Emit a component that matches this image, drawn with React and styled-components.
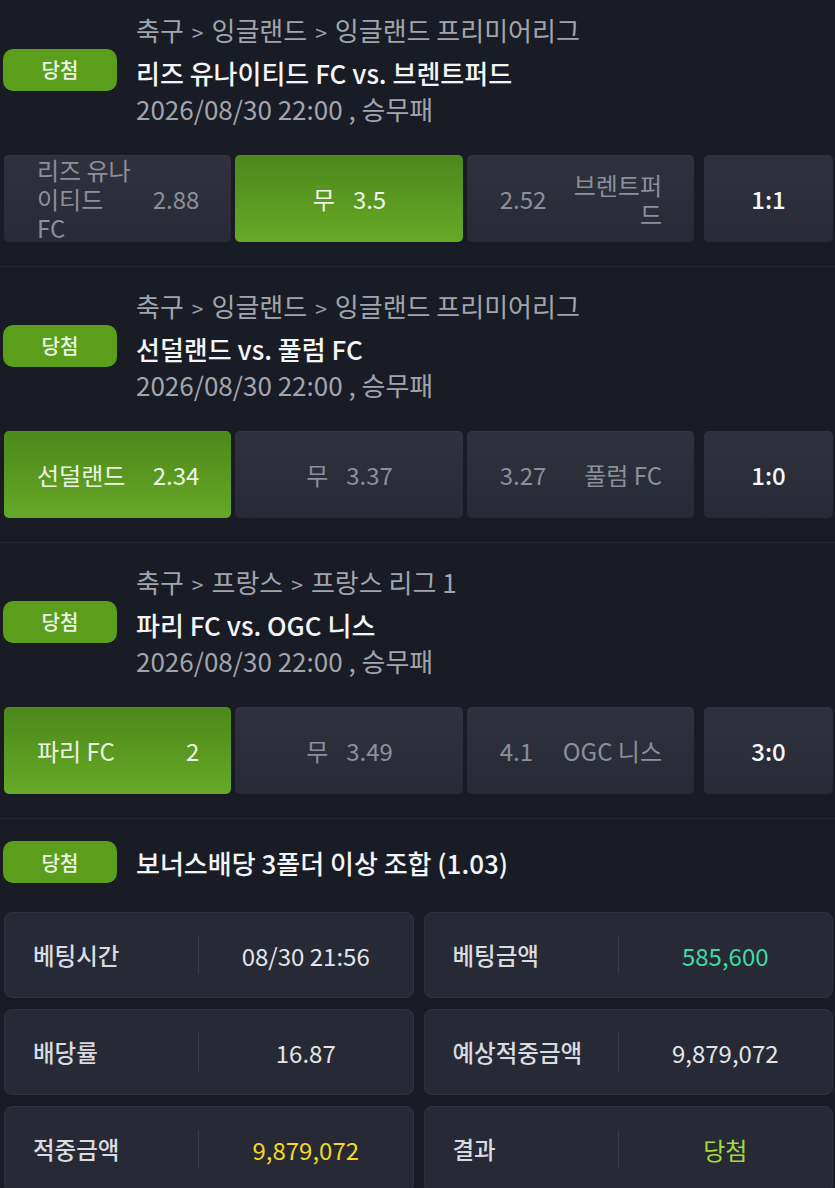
import React from "react";
import styled, { createGlobalStyle } from "styled-components";

const GlobalStyle = createGlobalStyle`
  html, body {
    margin: 0;
    padding: 0;
    background: #191c24;
  }
  body {
    font-family: "Noto Sans CJK KR", "Noto Sans", sans-serif;
    color: #e4e6ea;
  }
`;

const matches = [
  {
    path: ["축구", "잉글랜드", "잉글랜드 프리미어리그"],
    title: "리즈 유나이티드 FC vs. 브렌트퍼드",
    home: "리즈 유나이티드 FC",
    away: "브렌트퍼드",
    odds: ["2.88", "3.5", "2.52"],
    pick: 1,
    score: "1:1",
  },
  {
    path: ["축구", "잉글랜드", "잉글랜드 프리미어리그"],
    title: "선덜랜드 vs. 풀럼 FC",
    home: "선덜랜드",
    away: "풀럼 FC",
    odds: ["2.34", "3.37", "3.27"],
    pick: 0,
    score: "1:0",
  },
  {
    path: ["축구", "프랑스", "프랑스 리그 1"],
    title: "파리 FC vs. OGC 니스",
    home: "파리 FC",
    away: "OGC 니스",
    odds: ["2", "3.49", "4.1"],
    pick: 0,
    score: "3:0",
  },
];

const info = [
  { label: "베팅시간", value: "08/30 21:56" },
  { label: "베팅금액", value: "585,600", tone: "teal" },
  { label: "배당률", value: "16.87" },
  { label: "예상적중금액", value: "9,879,072" },
  { label: "적중금액", value: "9,879,072", tone: "yellow" },
  { label: "결과", value: "당첨", tone: "green" },
];

const toneColor = {
  teal: "#3fd9a2",
  yellow: "#f3d825",
  green: "#a3dc3a",
};

export default function App() {
  return (
    <>
      <GlobalStyle />
      <Page>
        {matches.map((m, i) => (
          <Section key={i} $first={i === 0}>
            <Header>
              <Path>
                {m.path.map((p, j) => (
                  <React.Fragment key={j}>
                    {j > 0 && <Sep>&gt;</Sep>}
                    {p}
                  </React.Fragment>
                ))}
              </Path>
              <BadgeSlot>
                <Badge>당첨</Badge>
              </BadgeSlot>
              <Title>{m.title}</Title>
              <DateLine>2026/08/30 22:00 , 승무패</DateLine>
            </Header>
            <OddsRow>
              <OddCell $active={m.pick === 0}>
                <TeamName>{m.home}</TeamName>
                <Odd>{m.odds[0]}</Odd>
              </OddCell>
              <OddCell $active={m.pick === 1} $center>
                <span>무</span>
                <Odd>{m.odds[1]}</Odd>
              </OddCell>
              <OddCell $active={m.pick === 2}>
                <Odd>{m.odds[2]}</Odd>
                <TeamName $right>{m.away}</TeamName>
              </OddCell>
              <ScoreCell>{m.score}</ScoreCell>
            </OddsRow>
          </Section>
        ))}
        <BonusSection>
          <BonusHead>
            <Badge>당첨</Badge>
            <BonusTitle>보너스배당 3폴더 이상 조합 (1.03)</BonusTitle>
          </BonusHead>
          <InfoGrid>
            {info.map((it) => (
              <InfoCell key={it.label}>
                <InfoLabel>{it.label}</InfoLabel>
                <InfoValue $tone={it.tone}>{it.value}</InfoValue>
              </InfoCell>
            ))}
          </InfoGrid>
        </BonusSection>
      </Page>
    </>
  );
}

const Page = styled.div`
  width: 835px;
  min-height: 1188px;
  overflow: hidden;
`;

const Section = styled.section`
  padding: ${(p) => (p.$first ? "12px" : "21px")} 2px 24px 4px;
  border-bottom: 1px solid #252831;
`;

const Header = styled.div`
  display: grid;
  grid-template-columns: 132px 1fr;
  grid-template-rows: 36px 36px 36px;
`;

const Path = styled.div`
  grid-column: 2;
  grid-row: 1;
  font-size: 26px;
  line-height: 36px;
  color: #a2a5ad;
  white-space: nowrap;
`;

const Sep = styled.span`
  display: inline-block;
  margin: 0 8px;
  font-size: 21px;
  color: #9a9da5;
`;

const BadgeSlot = styled.div`
  grid-column: 1;
  grid-row: 2;
  display: flex;
  align-items: center;
  margin-top: 7px;
`;

const Badge = styled.div`
  width: 114px;
  height: 42px;
  margin-left: -1px;
  border-radius: 10px;
  background: #5a9e1b;
  color: #eef5e4;
  font-size: 20px;
  font-weight: 500;
  display: flex;
  align-items: center;
  justify-content: center;
  flex-shrink: 0;
`;

const Title = styled.div`
  grid-column: 2;
  grid-row: 2;
  margin-top: 7px;
  font-size: 26px;
  line-height: 36px;
  font-weight: 500;
  color: #f4f5f7;
  white-space: nowrap;
`;

const DateLine = styled.div`
  grid-column: 2;
  grid-row: 3;
  margin-top: 7px;
  font-size: 26px;
  line-height: 36px;
  color: #a2a5ad;
  white-space: nowrap;
`;

const OddsRow = styled.div`
  margin-top: 35px;
  display: grid;
  grid-template-columns: 1fr 1fr 1fr 135px;
  gap: 4px;
  height: 87px;
`;

const OddCell = styled.div`
  border-radius: 5px;
  padding: 0 32px 0 33px;
  display: flex;
  align-items: center;
  justify-content: ${(p) => (p.$center ? "center" : "space-between")};
  gap: ${(p) => (p.$center ? "18px" : "8px")};
  font-size: 24px;
  color: ${(p) => (p.$active ? "#edf4e3" : "#8c8f99")};
  background: ${(p) =>
    p.$active
      ? "linear-gradient(180deg, #4c881b 0%, #66a927 100%)"
      : "linear-gradient(180deg, #2f323d 0%, #282b35 100%)"};
  box-shadow: inset 0 1px 0 rgba(255, 255, 255, 0.03);
`;

const TeamName = styled.span`
  max-width: ${(p) => (p.$right ? "102px" : "95px")};
  line-height: 29px;
  text-align: ${(p) => (p.$right ? "right" : "left")};
  word-break: normal;
  overflow-wrap: anywhere;
`;

const Odd = styled.span`
  white-space: nowrap;
`;

const ScoreCell = styled.div`
  margin-left: 6px;
  border-radius: 5px;
  display: flex;
  align-items: center;
  justify-content: center;
  font-size: 24px;
  font-weight: 500;
  color: #f6f7f9;
  background: linear-gradient(180deg, #2f323d 0%, #282b35 100%);
`;

const BonusSection = styled.section`
  padding: 22px 2px 0 4px;
`;

const BonusHead = styled.div`
  display: flex;
  align-items: center;
  gap: 19px;
  height: 42px;
`;

const BonusTitle = styled.div`
  font-size: 26px;
  font-weight: 500;
  color: #f4f5f7;
  white-space: nowrap;
`;

const InfoGrid = styled.div`
  margin-top: 29px;
  display: grid;
  grid-template-columns: 1fr 1fr;
  column-gap: 10px;
  row-gap: 11px;
`;

const InfoCell = styled.div`
  height: 86px;
  box-sizing: border-box;
  border-radius: 8px;
  border: 1px solid #2f333d;
  background: #272a34;
  display: grid;
  grid-template-columns: 194px 1fr;
  align-items: center;
`;

const InfoLabel = styled.div`
  height: 38px;
  display: flex;
  align-items: center;
  padding-left: 28px;
  border-right: 1px solid #3a3e48;
  font-size: 23.5px;
  font-weight: 500;
  color: #d9dbe0;
  white-space: nowrap;
`;

const InfoValue = styled.div`
  text-align: center;
  font-size: 24px;
  font-weight: 400;
  color: ${(p) => toneColor[p.$tone] || "#e2e4e8"};
`;
